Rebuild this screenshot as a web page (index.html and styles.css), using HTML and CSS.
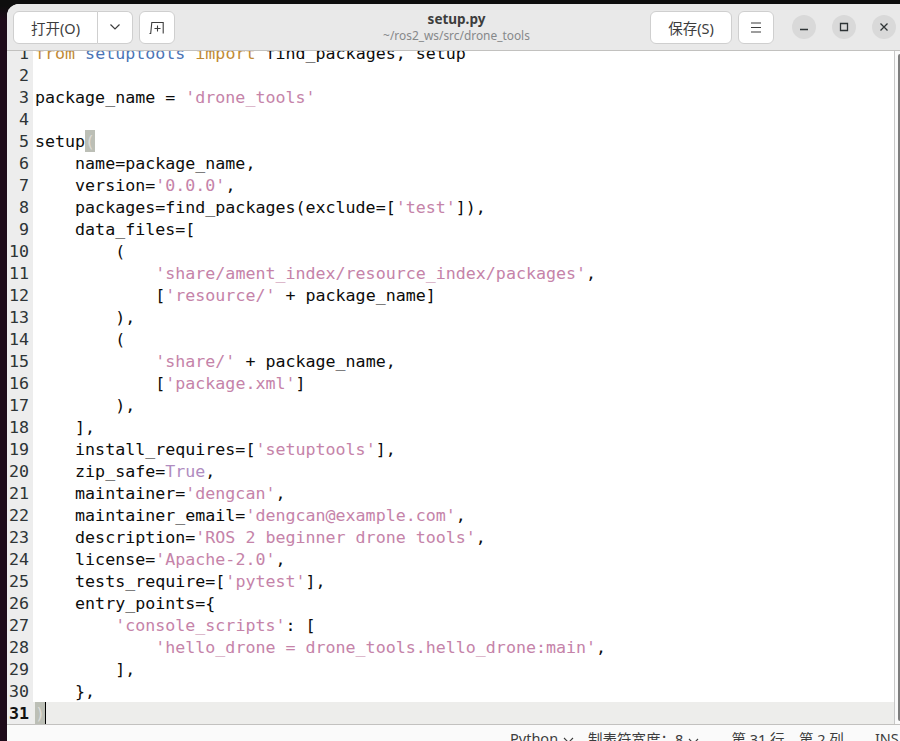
FILE: index.html
```html
<!DOCTYPE html>
<html lang="zh">
<head>
  <meta charset="UTF-8">
  <title>setup.py</title>
  <link rel="stylesheet" href="styles.css">
</head>
<body>
  <div class="window">
    <div class="header">
      <div class="btn-group">
        <button class="btn open-btn">打开(O)</button>
        <button class="btn arrow-btn">
          <svg width="12" height="8" viewBox="0 0 12 8"><path d="M1.5 1.5 6 6l4.5-4.5" fill="none" stroke="#3d3d3d" stroke-width="1.2"/></svg>
        </button>
      </div>
      <button class="btn tab-btn">
        <svg width="16" height="13" viewBox="0 0 16 13"><path d="M.5 12.500h1.200L2.800 1.500h11.400v10.900M8.500 4.500v6M5.500 7.500h6" fill="none" stroke="#3d3d3d" stroke-width="1.100"/></svg>
      </button>
      <div class="title">
        <div class="title-name">setup.py</div>
        <div class="title-path">~/ros2_ws/src/drone_tools</div>
      </div>
      <button class="btn save-btn">保存(S)</button>
      <button class="btn menu-btn">
        <svg width="12" height="11" viewBox="0 0 12 11"><path d="M1 1h10M1 5.500h10M1 10h10" fill="none" stroke="#3d3d3d" stroke-width="1.100"/></svg>
      </button>
      <div class="win-controls">
        <div class="win-btn"><svg width="10" height="10" viewBox="0 0 10 10"><path d="M1 7.500h8" fill="none" stroke="#2e3436" stroke-width="1.300"/></svg></div>
        <div class="win-btn"><svg width="10" height="10" viewBox="0 0 10 10"><path d="M1.500 1.500h7v7h-7z" fill="none" stroke="#2e3436" stroke-width="1.300"/></svg></div>
        <div class="win-btn"><svg width="10" height="10" viewBox="0 0 10 10"><path d="M1.500 1.500l7 7M8.500 1.500l-7 7" fill="none" stroke="#2e3436" stroke-width="1.300"/></svg></div>
      </div>
    </div>

    <div class="editor">
      <div class="lines">
        <div class="line"><span class="num">1</span><span class="code"><span class="kw">from</span> <span class="mod">setuptools</span> <span class="kw">import</span> find_packages, setup</span></div>
        <div class="line"><span class="num">2</span><span class="code"></span></div>
        <div class="line"><span class="num">3</span><span class="code">package_name = <span class="str">'drone_tools'</span></span></div>
        <div class="line"><span class="num">4</span><span class="code"></span></div>
        <div class="line"><span class="num">5</span><span class="code">setup<span class="match">(</span></span></div>
        <div class="line"><span class="num">6</span><span class="code">    name=package_name,</span></div>
        <div class="line"><span class="num">7</span><span class="code">    version=<span class="str">'0.0.0'</span>,</span></div>
        <div class="line"><span class="num">8</span><span class="code">    packages=find_packages(exclude=[<span class="str">'test'</span>]),</span></div>
        <div class="line"><span class="num">9</span><span class="code">    data_files=[</span></div>
        <div class="line"><span class="num">10</span><span class="code">        (</span></div>
        <div class="line"><span class="num">11</span><span class="code">            <span class="str">'share/ament_index/resource_index/packages'</span>,</span></div>
        <div class="line"><span class="num">12</span><span class="code">            [<span class="str">'resource/'</span> + package_name]</span></div>
        <div class="line"><span class="num">13</span><span class="code">        ),</span></div>
        <div class="line"><span class="num">14</span><span class="code">        (</span></div>
        <div class="line"><span class="num">15</span><span class="code">            <span class="str">'share/'</span> + package_name,</span></div>
        <div class="line"><span class="num">16</span><span class="code">            [<span class="str">'package.xml'</span>]</span></div>
        <div class="line"><span class="num">17</span><span class="code">        ),</span></div>
        <div class="line"><span class="num">18</span><span class="code">    ],</span></div>
        <div class="line"><span class="num">19</span><span class="code">    install_requires=[<span class="str">'setuptools'</span>],</span></div>
        <div class="line"><span class="num">20</span><span class="code">    zip_safe=<span class="bool">True</span>,</span></div>
        <div class="line"><span class="num">21</span><span class="code">    maintainer=<span class="str">'dengcan'</span>,</span></div>
        <div class="line"><span class="num">22</span><span class="code">    maintainer_email=<span class="str">'dengcan@example.com'</span>,</span></div>
        <div class="line"><span class="num">23</span><span class="code">    description=<span class="str">'ROS 2 beginner drone tools'</span>,</span></div>
        <div class="line"><span class="num">24</span><span class="code">    license=<span class="str">'Apache-2.0'</span>,</span></div>
        <div class="line"><span class="num">25</span><span class="code">    tests_require=[<span class="str">'pytest'</span>],</span></div>
        <div class="line"><span class="num">26</span><span class="code">    entry_points={</span></div>
        <div class="line"><span class="num">27</span><span class="code">        <span class="str">'console_scripts'</span>: [</span></div>
        <div class="line"><span class="num">28</span><span class="code">            <span class="str">'hello_drone = drone_tools.hello_drone:main'</span>,</span></div>
        <div class="line"><span class="num">29</span><span class="code">        ],</span></div>
        <div class="line"><span class="num">30</span><span class="code">    },</span></div>
        <div class="line current"><span class="num">31</span><span class="code"><span class="match dim">)</span><span class="caret"></span></span></div>
      </div>
      <div class="scrollbar"><div class="thumb"></div></div>
    </div>

    <div class="footer">
      <span class="status lang">Python<svg width="11" height="7" viewBox="0 0 11 7"><path d="M1 1l4.500 4.500L10 1" fill="none" stroke="#3d3d3d" stroke-width="1.100"/></svg></span>
      <span class="status tabs">制表符宽度：8<svg width="11" height="7" viewBox="0 0 11 7"><path d="M1 1l4.500 4.500L10 1" fill="none" stroke="#3d3d3d" stroke-width="1.100"/></svg></span>
      <span class="status pos">第 31 行，第 2 列</span>
      <span class="status ins">INS</span>
    </div>
  </div>
</body>
</html>
```

FILE: styles.css
```css
html, body {
  height: 741px;
  overflow: hidden;
}

body {
  margin: 0;
  padding: 4px 0 0 7px;
  box-sizing: border-box;
  background: linear-gradient(#0e0e0e 0, #0e0e0e 6px, #1e0b1a 20px);
  font-family: "Noto Sans", "Noto Sans CJK SC", sans-serif;
  color: #3d3d3d;
}

.window {
  display: flex;
  flex-direction: column;
  height: 737px;
  background: #fafafa;
  border-radius: 12px 0 0 0;
  overflow: hidden;
}

/* header */
.header {
  display: flex;
  align-items: center;
  flex: none;
  height: 46px;
  padding: 0 4px 0 6px;
  background: #e9e9e9;
  border-bottom: 1px solid #c2c1bf;
}

.btn {
  height: 33px;
  padding: 0;
  display: flex;
  align-items: center;
  justify-content: center;
  background: #fff;
  border: 1px solid #cfcfcf;
  border-radius: 6px;
  font-family: inherit;
  font-size: 14.500px;
  color: #3d3d3d;
}

.btn-group {
  display: flex;
}

.open-btn {
  width: 85px;
  border-radius: 6px 0 0 6px;
}

.arrow-btn {
  width: 35px;
  border-left: none;
  border-radius: 0 6px 6px 0;
}

.tab-btn {
  width: 36px;
  margin-left: 6px;
}

.title {
  flex: 1;
  padding-left: 88px;
  text-align: center;
}

.title-name {
  font-size: 13.500px;
  line-height: 16px;
  font-weight: 700;
  color: #3d3d3d;
}

.title-path {
  margin-top: 1px;
  font-size: 11.900px;
  line-height: 15px;
  color: #86888a;
}

.save-btn {
  width: 82px;
}

.menu-btn {
  width: 36px;
  margin-left: 6px;
}

.win-controls {
  display: flex;
  gap: 16px;
  margin-left: 18px;
}

.win-btn {
  width: 24px;
  height: 24px;
  display: flex;
  align-items: center;
  justify-content: center;
  border-radius: 50%;
  background: #d9d9d9;
}

/* editor */
.editor {
  display: flex;
  flex: none;
  height: 673px;
  overflow: hidden;
  background: #fff;
  border-bottom: 1px solid #c2c1bf;
}

.lines {
  flex: 1;
  margin-top: -9px;
  font-family: "DejaVu Sans Mono", monospace;
  font-size: 16.650px;
  color: #0c0c0c;
}

.line {
  display: flex;
  height: 22px;
  line-height: 24px;
}

.num {
  flex: none;
  width: 22px;
  padding-right: 4px;
  text-align: right;
  background: #ededed;
  color: #2e3436;
}

.code {
  flex: 1;
  padding-left: 2px;
  white-space: pre;
}

.current .code {
  background: #ededeb;
}

.current .num {
  font-weight: 700;
  color: #111;
}

.kw { color: #c08a35; }
.mod { color: #4a74b6; }
.str { color: #c583a9; }
.bool { color: #b08cc0; }

.match {
  display: inline-block;
  height: 22px;
  vertical-align: top;
  background: #bcbfb6;
  color: #dcdcd8;
}

.caret {
  display: inline-block;
  width: 1px;
  height: 22px;
  vertical-align: top;
  background: #000;
}

.scrollbar {
  flex: none;
  width: 5px;
  background: #fafafa;
  border-left: 1px solid #c8c8c8;
}

.thumb {
  width: 2px;
  height: 667px;
  margin: 3px 0 0 3px;
  background: #7e7e7e;
  border-radius: 2px 0 0 2px;
}

/* status bar */
.footer {
  display: flex;
  flex: none;
  height: 26px;
  align-items: center;
  font-size: 14.500px;
  color: #3d3d3d;
}

.status {
  white-space: nowrap;
}

.status svg {
  margin-left: 5px;
}

.lang { margin-left: 503px; }
.tabs { margin-left: 14px; }
.pos { margin-left: 32px; }
.ins { margin-left: 31px; }
```
